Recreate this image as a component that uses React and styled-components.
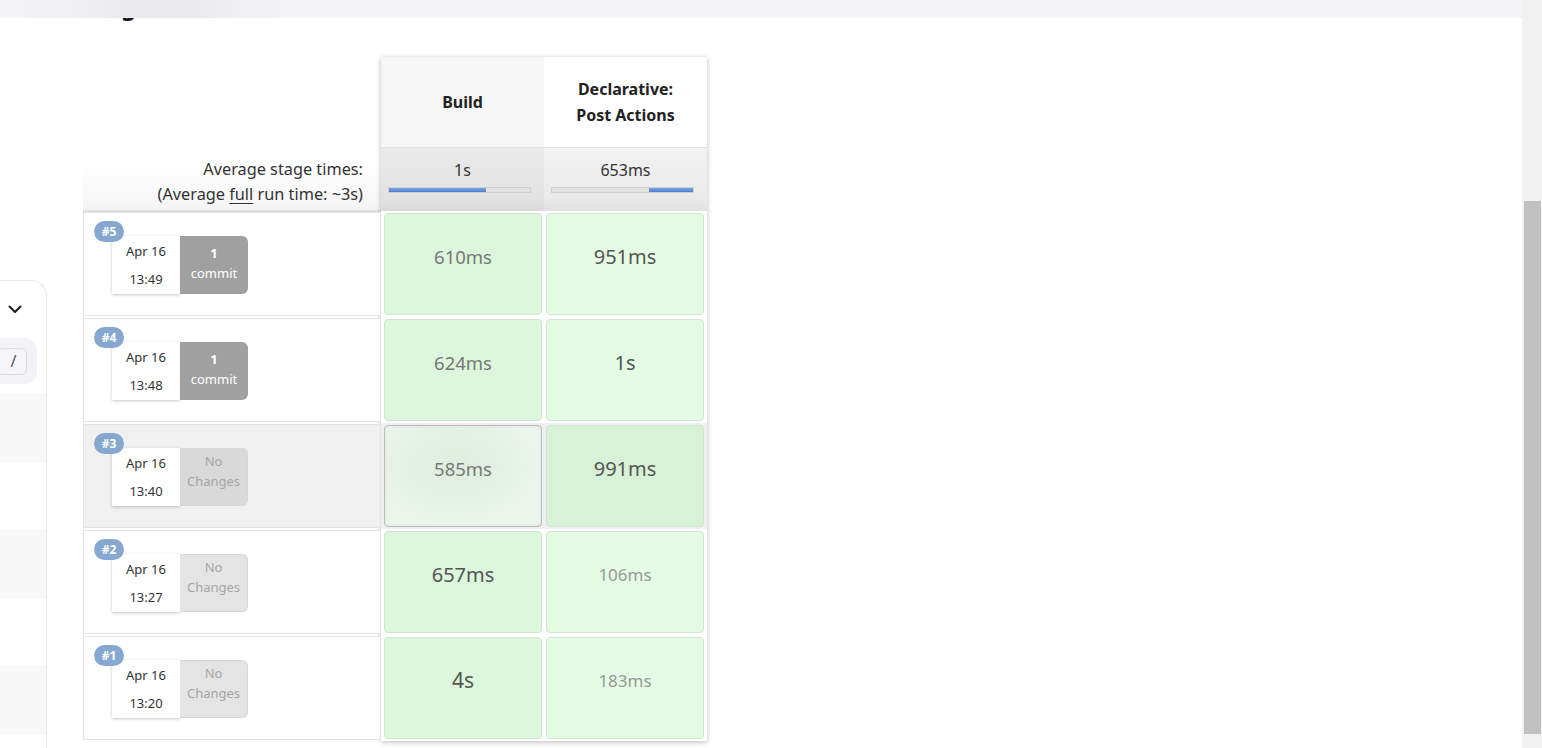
import React from 'react';
import styled, { createGlobalStyle } from 'styled-components';

const GlobalStyle = createGlobalStyle`
  html, body {
    margin: 0;
    padding: 0;
    background: #fff;
  }
  body {
    font-family: "Noto Sans", "Open Sans", sans-serif;
    color: #333;
  }
  * {
    box-sizing: border-box;
  }
`;

const Shell = styled.div`
  display: flex;
  height: 100vh;
  overflow: hidden;
`;

const Page = styled.div`
  position: relative;
  flex: 1;
  overflow: hidden;
`;

// frosted sticky header lying over the page title
const TopBar = styled.div`
  position: absolute;
  top: 0;
  left: 0;
  right: 0;
  height: 18px;
  z-index: 5;
  background: linear-gradient(
    90deg,
    #f4f4f6 0,
    #f1f1f3 60px,
    #ebebee 120px,
    #ebebee 200px,
    #f1f1f3 250px,
    #f4f4f6 300px
  );
`;

const Body = styled.div`
  display: flex;
  align-items: flex-start;
`;

const Sidebar = styled.aside`
  flex-shrink: 0;
  width: 60px;
  height: 480px;
  margin: 280px 0 0 -13px;
  border: 1.5px solid #e6e6ee;
  border-left: none;
  border-bottom: none;
  border-top-right-radius: 16px;
`;

const ChevronRow = styled.div`
  height: 57px;
  display: flex;
  align-items: center;
  justify-content: flex-end;
  padding-right: 24px;
`;

const SearchBox = styled.div`
  height: 46px;
  margin: 0 9.5px 10px 0;
  background: #f2f2f7;
  border-radius: 0 12px 12px 0;
  display: flex;
  align-items: center;
  justify-content: flex-end;
  padding-right: 10px;
`;

const Kbd = styled.kbd`
  width: 30px;
  height: 27px;
  display: flex;
  align-items: center;
  justify-content: center;
  padding-left: 4px;
  border: 1.5px solid #dcdce5;
  border-radius: 6px;
  background: #f6f6fa;
  font-family: "Noto Sans", sans-serif;
  font-size: 16px;
  color: #50505a;
`;

const ListRow = styled.div`
  height: 68px;
  background: ${p => (p.striped ? '#f7f7f7' : '#fff')};
`;

const Main = styled.main`
  flex-shrink: 0;
  margin-left: 36px;
`;

const Heading = styled.h2`
  margin: -9px 0 0;
  font-size: 24px;
  line-height: 30px;
  font-weight: 700;
  color: #14141f;
`;

const StageView = styled.div`
  margin-top: 36px;
  display: flex;
  align-items: flex-start;
`;

const BuildColumn = styled.div`
  width: 298px;
`;

const HeaderSpace = styled.div`
  height: 91px;
`;

const AverageLabel = styled.div`
  height: 64px;
  padding: 9px 18px 0 0;
  text-align: right;
  font-size: 16.3px;
  line-height: 25px;
  color: #333;
  background: linear-gradient(#fff, #fff 30%, #f4f4f4);
  border-bottom: 2px solid #dedede;

  u {
    text-underline-offset: 3px;
  }
`;

const RunRow = styled.div`
  position: relative;
  height: 104px;
  margin-bottom: 2px;
  border: 1px solid #e4e4e4;
  background: ${p => (p.hover ? '#f0f0f0' : '#fff')};
  padding: 23px 0 0 28px;
  display: flex;
  align-items: flex-start;
`;

const Badge = styled.span`
  position: absolute;
  top: 8px;
  left: 10px;
  z-index: 2;
  width: 30px;
  height: 21px;
  border-radius: 11px;
  background: #86a8d0;
  color: #fff;
  font-size: 12px;
  font-weight: 700;
  display: flex;
  align-items: center;
  justify-content: center;
`;

const DateBox = styled.div`
  width: 68px;
  height: 58px;
  padding-top: 1px;
  background: #fff;
  box-shadow: 0 1px 3px rgba(0, 0, 0, 0.22);
  text-align: center;
  font-size: 13px;
  line-height: 28px;
  color: #333;
`;

const ChangeBox = styled.div`
  width: 68px;
  height: 58px;
  border-radius: 0 6px 6px 0;
  text-align: center;
  font-size: 13px;
  line-height: 20px;
  padding-top: ${p => (p.commits ? '7px' : '2px')};
  background: ${p => (p.commits ? '#a0a0a0' : p.hover ? '#d9d9d9' : '#e4e4e4')};
  color: ${p => (p.commits ? '#fff' : '#a5a5a5')};
  border: ${p => (p.commits ? 'none' : '1px solid #d6d6d6')};
  border-left: none;

  b {
    display: block;
  }
`;

const StageTable = styled.div`
  width: 326px;
  background: #fff;
  box-shadow: 0 1px 5px rgba(0, 0, 0, 0.28);
`;

const TwoCols = styled.div`
  display: grid;
  grid-template-columns: 1fr 1fr;
`;

const HeaderCell = styled.div`
  height: 90px;
  display: flex;
  align-items: center;
  justify-content: center;
  text-align: center;
  background: ${p => p.bg};
  font-size: 16px;
  font-weight: 700;
  line-height: 26px;
  color: #222;
`;

const AvgCell = styled.div`
  height: 64px;
  padding-top: 12px;
  border-top: 1px solid #e0e0e0;
  background: ${p => p.bg};
  text-align: center;
  font-size: 16px;
  line-height: 20px;
  color: #333;
`;

const Bar = styled.div`
  width: 143px;
  height: 6px;
  margin: 7px 0 0 7px;
  background: #e2e2e2;
  border: 1px solid #cfcfcf;
  display: flex;
  justify-content: ${p => (p.end ? 'flex-end' : 'flex-start')};
`;

const BarFill = styled.div`
  height: 100%;
  background: linear-gradient(#7aa5e6, #4d7ece);
`;

const CellRow = styled.div`
  height: 106px;
  display: grid;
  grid-template-columns: 1fr 1fr;
  gap: 4px;
  padding: 2px 3px;
  background: ${p => (p.hover ? '#efefef' : '#fff')};
`;

const StageCell = styled.div`
  display: flex;
  align-items: center;
  justify-content: center;
  padding-bottom: 16px;
  border-radius: 4px;
  border: 1px solid ${p => (p.focus ? '#bdbdbd' : '#cfe6cf')};
  background: ${p =>
    p.focus
      ? 'radial-gradient(ellipse at 45% 40%, #dfeddf 0%, #e4f0e4 35%, #ecf5ec 75%)'
      : p.bg};
  box-shadow: ${p => (p.focus ? 'inset 0 0 3px rgba(0,0,0,0.08)' : 'none')};
  font-size: ${p => p.size}px;
  color: ${p => p.color};
`;

const ScrollTrack = styled.div`
  flex-shrink: 0;
  width: 20px;
  height: 100vh;
  background: #f1f1f1;
  padding: 201px 1px 0 2px;
`;

const ScrollThumb = styled.div`
  height: 533px;
  background: #c1c1c1;
`;

const runs = [
  { id: 5, time: '13:49', commits: 1, cells: [['610ms', 18.5, '#777'], ['951ms', 20, '#555']] },
  { id: 4, time: '13:48', commits: 1, cells: [['624ms', 18.5, '#777'], ['1s', 20, '#555']] },
  { id: 3, time: '13:40', commits: 0, hover: true, cells: [['585ms', 18.5, '#777'], ['991ms', 20, '#555']] },
  { id: 2, time: '13:27', commits: 0, cells: [['657ms', 20, '#555'], ['106ms', 17, '#999']] },
  { id: 1, time: '13:20', commits: 0, cells: [['4s', 21, '#555'], ['183ms', 17, '#999']] },
];

const Chevron = () => (
  <svg width="14" height="9" viewBox="0 0 14 9">
    <polyline points="1.5,1.5 7,7 12.5,1.5" fill="none" stroke="#1b1b24" strokeWidth="2" strokeLinecap="round" strokeLinejoin="round" />
  </svg>
);

const App = () => {
  return (
    <Shell>
      <GlobalStyle />
      <Page>
        <TopBar />
        <Body>
          <Sidebar>
            <ChevronRow>
              <Chevron />
            </ChevronRow>
            <SearchBox>
              <Kbd>/</Kbd>
            </SearchBox>
            {[0, 1, 2, 3, 4, 5].map(i => (
              <ListRow key={i} striped={i % 2 === 0} />
            ))}
          </Sidebar>
          <Main>
            <Heading>Stage View</Heading>
            <StageView>
              <BuildColumn>
                <HeaderSpace />
                <AverageLabel>
                  Average stage times:
                  <br />
                  (Average <u>full</u> run time: ~3s)
                </AverageLabel>
                {runs.map(run => (
                  <RunRow key={run.id} hover={run.hover}>
                    <Badge>#{run.id}</Badge>
                    <DateBox>
                      Apr 16
                      <br />
                      {run.time}
                    </DateBox>
                    {run.commits ? (
                      <ChangeBox commits>
                        <b>1</b>
                        commit
                      </ChangeBox>
                    ) : (
                      <ChangeBox hover={run.hover}>
                        No
                        <br />
                        Changes
                      </ChangeBox>
                    )}
                  </RunRow>
                ))}
              </BuildColumn>
              <StageTable>
                <TwoCols>
                  <HeaderCell bg="#f6f6f6">Build</HeaderCell>
                  <HeaderCell bg="#fff">
                    Declarative:
                    <br />
                    Post Actions
                  </HeaderCell>
                </TwoCols>
                <TwoCols>
                  <AvgCell bg="linear-gradient(#eaeaea, #e2e2e2 80%, #d9d9d9)">
                    1s
                    <Bar>
                      <BarFill style={{ width: '69%' }} />
                    </Bar>
                  </AvgCell>
                  <AvgCell bg="linear-gradient(#f2f2f2, #eaeaea 80%, #e2e2e2)">
                    653ms
                    <Bar end>
                      <BarFill style={{ width: '31%' }} />
                    </Bar>
                  </AvgCell>
                </TwoCols>
                {runs.map(run => (
                  <CellRow key={run.id} hover={run.hover}>
                    {run.cells.map(([text, size, color], i) => (
                      <StageCell
                        key={i}
                        size={size}
                        color={color}
                        focus={run.hover && i === 0}
                        bg={i === 0 ? '#dcf7dc' : run.hover ? '#d7f2d7' : '#e3fce3'}
                      >
                        {text}
                      </StageCell>
                    ))}
                  </CellRow>
                ))}
              </StageTable>
            </StageView>
          </Main>
        </Body>
      </Page>
      <ScrollTrack>
        <ScrollThumb />
      </ScrollTrack>
    </Shell>
  );
};

export default App;
